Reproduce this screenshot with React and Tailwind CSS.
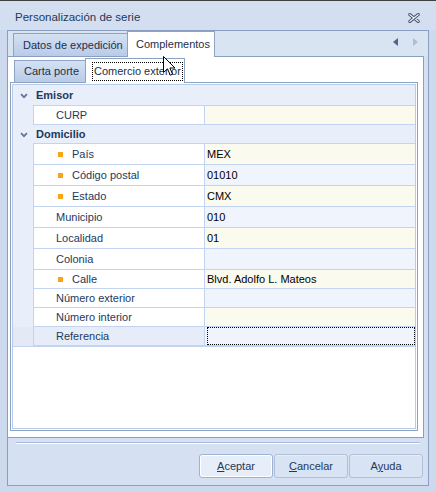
import React from "react";

const rows = [
  { type: "h", label: "Emisor", hc: "h-[21px]" },
  { label: "CURP", hc: "h-[19px]", v: "", cream: true },
  { type: "h", label: "Domicilio", hc: "h-[19px]" },
  { label: "País", req: true, hc: "h-[21px]", v: "MEX", cream: true },
  { label: "Código postal", req: true, hc: "h-[21px]", v: "01010" },
  { label: "Estado", req: true, hc: "h-[21px]", v: "CMX", cream: true },
  { label: "Municipio", hc: "h-[21px]", v: "010" },
  { label: "Localidad", hc: "h-[21px]", v: "01", cream: true },
  { label: "Colonia", hc: "h-[21px]", v: "" },
  { label: "Calle", req: true, hc: "h-[19px]", v: "Blvd. Adolfo L. Mateos", cream: true },
  { label: "Número exterior", hc: "h-[19px]", v: "" },
  { label: "Número interior", hc: "h-[19px]", v: "", cream: true },
  { label: "Referencia", hc: "h-[19px]", v: "", sel: true },
];

function Chevron() {
  return (
    <svg width="8" height="6" viewBox="0 0 8 6" className="block">
      <path d="M1 1.2 L4 4.2 L7 1.2" fill="none" stroke="#62779a" strokeWidth="1.8" />
    </svg>
  );
}

function Row({ r }) {
  if (r.type === "h") {
    return (
      <div className={`flex ${r.hc} bg-[#e8effa]`}>
        <div className="w-[20px] flex items-center justify-center pl-[1px]">
          <Chevron />
        </div>
        <div className="flex-1 border-b border-[#c2d4f1] flex items-center pl-[3px] font-bold text-[11px] text-[#1e395b]">
          {r.label}
        </div>
      </div>
    );
  }
  return (
    <div className={`flex ${r.hc}`}>
      <div className={`w-[20px] ${r.sel ? "bg-[#e3eaf6]" : "bg-[#e8effa]"}`} />
      <div
        className={`w-[171px] border-l border-b border-[#c2d4f1] flex items-center text-[11px] text-[#1e395b] ${
          r.sel ? "bg-[#e6edf9]" : "bg-white"
        } ${r.req ? "pl-[24px]" : "pl-[22px]"}`}
      >
        {r.req && <span className="w-[5px] h-[5px] bg-[#f9a21b] mr-[9px] shrink-0" />}
        {r.label}
      </div>
      <div
        className={`flex-1 border-l border-b border-[#c2d4f1] flex items-center pl-[2px] text-[11px] text-black ${
          r.cream ? "bg-[#fbfaef]" : "bg-[#f0f4fd]"
        }`}
      >
        {r.sel ? (
          <div className="w-full h-full border border-dotted border-black" />
        ) : (
          r.v
        )}
      </div>
    </div>
  );
}

function Btn({ children, def }) {
  return (
    <div
      className={`w-[74px] h-[24px] rounded-[3px] border flex items-center justify-center text-[11px] text-[#1e395b] ${
        def
          ? "border-[#9fb2cf] bg-[#e6eef9] shadow-[inset_0_0_0_1px_#ffffff]"
          : "border-[#b0c0d8] bg-[#d8e3f3] shadow-[inset_0_1px_0_#e8eff9]"
      }`}
    >
      {children}
    </div>
  );
}

export default function App() {
  return (
    <div className="w-[436px] h-[492px] bg-[#cddaed] border-t border-[#3f3f3f] flex flex-col relative font-['Liberation_Sans',Arial,sans-serif] select-none overflow-hidden">
      {/* title bar */}
      <div className="h-[29px] flex items-center justify-between pl-[15px] pr-[16px] bg-[#d3dff0]">
        <span className="text-[11.5px] text-[#1e395b] pt-[4px]">Personalización de serie</span>
        <svg width="12" height="10" viewBox="0 0 12 10" className="mt-[5px]">
          <path d="M1.8 1.6 L10.2 8.4 M10.2 1.6 L1.8 8.4" stroke="#4a5a73" strokeWidth="3.2" strokeLinecap="round" />
          <path d="M1.8 1.6 L10.2 8.4 M10.2 1.6 L1.8 8.4" stroke="#ffffff" strokeWidth="1.2" strokeLinecap="round" />
        </svg>
      </div>

      {/* client */}
      <div className="ml-[7px] w-[422px] h-[456px] border border-[#8a9fbf] bg-[#d5e1f2] flex flex-col">
        {/* outer tab headers */}
        <div className="h-[25px] flex items-end pl-[5px] bg-[#d9e4f3] relative">
          <div className="w-[115px] h-[23px] border border-b-0 border-[#8ea3c2] bg-gradient-to-b from-[#d4e1f3] to-[#b8cbe7] flex items-center pl-[9px] text-[11px] text-[#1e2f4a]">
            Datos de expedición
          </div>
          <div className="w-[88px] h-[26px] -mb-px -ml-px relative z-10 border border-b-0 border-[#8ea3c2] bg-white flex items-center pl-[8px] text-[11px] text-[#1e2f4a]">
            Complementos
          </div>
          <div className="ml-auto mr-[10px] mb-[10px] flex items-center gap-[15px]">
            <svg width="5" height="8" viewBox="0 0 5 8"><path d="M5 0 L0 4 L5 8 Z" fill="#50658a" /></svg>
            <svg width="5" height="8" viewBox="0 0 5 8"><path d="M0 0 L5 4 L0 8 Z" fill="#aebdd3" /></svg>
          </div>
        </div>

        {/* outer page */}
        <div className="w-[416px] h-[382px] border-t border-r border-b border-[#8a9fbf] bg-white">
          <div className="ml-[2px] w-[408px]">
            {/* inner tab headers */}
            <div className="h-[25px] flex items-end pl-[4px]">
              <div className="w-[72px] h-[22px] border border-b-0 border-[#8ea3c2] bg-gradient-to-b from-[#d4e1f3] to-[#b8cbe7] flex items-center pl-[9px] text-[11px] text-[#1e2f4a]">
                Carta porte
              </div>
              <div className="w-[100px] h-[25px] -mb-px -ml-px relative z-10 border border-b-0 border-[#8ea3c2] bg-white flex items-center pl-[6px] pt-[1px] text-[11px] text-[#1e2f4a]">
                <span className="border border-dotted border-black px-[1px] leading-[17px]">Comercio exterior</span>
              </div>
            </div>
            {/* inner page */}
            <div className="h-[349px] border border-[#8ea3c2] bg-white p-px">
              <div className="h-[345px] border border-[#b7cbea] bg-white">
                {rows.map((r, i) => (
                  <Row key={i} r={r} />
                ))}
                <div className="h-px bg-[#c2d4f1]" />
              </div>
            </div>
          </div>
        </div>

        {/* separator */}
        <div className="mt-[4px] mx-[8px] h-[2px] border-t border-[#a9bbd4] bg-white" />

        {/* buttons */}
        <div className="mt-[10px] flex justify-end gap-[1px] pr-[5px]">
          <Btn def>
            <span><span className="underline">A</span>ceptar</span>
          </Btn>
          <Btn>
            <span><span className="underline">C</span>ancelar</span>
          </Btn>
          <Btn>
            <span>A<span className="underline">y</span>uda</span>
          </Btn>
        </div>
      </div>

      {/* mouse cursor */}
      <svg className="absolute left-[163px] top-[55px] z-20" width="13" height="21" viewBox="0 0 13 21">
        <path d="M0.5 0.5 L0.5 16.5 L4.5 12.8 L7.3 19.2 L9.6 18.2 L6.9 12 L12 12 Z" fill="#ffffff" stroke="#000000" strokeWidth="1" />
      </svg>
    </div>
  );
}
